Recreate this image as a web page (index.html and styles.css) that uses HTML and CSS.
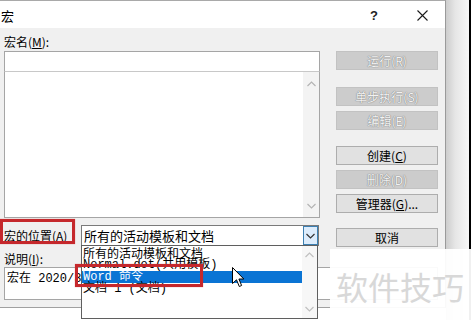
FILE: index.html
```html
<!DOCTYPE html>
<html lang="zh-CN">
<head>
<meta charset="utf-8">
<title>宏</title>
<link rel="stylesheet" href="styles.css">
</head>
<body>
<div class="screen">
  <div class="dialog">
    <div class="titlebar">
      <span class="title">宏</span>
      <span class="help">?</span>
      <span class="close"><svg width="11" height="11" viewBox="0 0 11 11"><path d="M0.5 0.5 L10.5 10.5 M10.5 0.5 L0.5 10.5" stroke="#1a1a1a" stroke-width="1.1" fill="none"/></svg></span>
    </div>
    <div class="content">
      <div class="main">
        <div class="left">
          <div class="label name-label">宏名(<u>M</u>):</div>
          <div class="input"></div>
          <div class="listbox">
            <div class="vscroll">
              <svg class="arrow" width="9" height="6" viewBox="0 0 9 6"><path d="M0.5 5 L4.5 1 L8.5 5" stroke="#b4b4b4" stroke-width="1.2" fill="none"/></svg>
              <svg class="arrow" width="9" height="6" viewBox="0 0 9 6"><path d="M0.5 1 L4.5 5 L8.5 1" stroke="#b4b4b4" stroke-width="1.2" fill="none"/></svg>
            </div>
          </div>
        </div>
        <div class="buttons">
          <div class="btn disabled">运行(R)</div>
          <div class="btn disabled gap-s">单步执行(S)</div>
          <div class="btn disabled gap-xs">编辑(E)</div>
          <div class="btn gap-m">创建(<u>C</u>)</div>
          <div class="btn disabled gap-xs">删除(D)</div>
          <div class="btn gap-xs">管理器(<u>G</u>)...</div>
        </div>
      </div>
      <div class="location-row">
        <div class="label loc-label">宏的位置(<u>A</u>)</div>
        <div class="combo">
          <span class="combo-text">所有的活动模板和文档</span>
          <span class="combo-btn"><svg width="9" height="6" viewBox="0 0 9 6"><path d="M0.5 1 L4.5 5 L8.5 1" stroke="#333" stroke-width="1.2" fill="none"/></svg></span>
        </div>
        <div class="btn cancel">取消</div>
      </div>
      <div class="label desc-label">说明(<u>I</u>):</div>
      <div class="desc">宏在 2020/3/25 由 user 创建</div>
    </div>
  </div>
  <div class="shadow"></div>
  <div class="edge"></div>

  <div class="dropdown">
    <div class="items">
      <div class="item cjk">所有的活动模板和文档</div>
      <div class="item">Normal.dot(共用模板)</div>
      <div class="item selected">Word 命令</div>
      <div class="item">文档 1 (文档)</div>
    </div>
    <div class="dd-scroll">
      <svg width="9" height="6" viewBox="0 0 9 6"><path d="M0.5 5 L4.5 1 L8.5 5" stroke="#c0c0c0" stroke-width="1.2" fill="none"/></svg>
      <svg width="9" height="6" viewBox="0 0 9 6"><path d="M0.5 1 L4.5 5 L8.5 1" stroke="#c0c0c0" stroke-width="1.2" fill="none"/></svg>
    </div>
  </div>

  <div class="redbox redbox-loc"></div>
  <div class="redbox redbox-word"></div>

  <svg class="cursor" width="13" height="21" viewBox="0 0 13 21"><path d="M0.5 0.5 L0.5 16.5 L4.5 12.8 L7.3 19.5 L9.6 18.5 L6.9 12 L11.8 12 Z" fill="#fff" stroke="#000" stroke-width="1" stroke-linejoin="miter"/></svg>

  <div class="watermark">软件技巧</div>
</div>
</body>
</html>
```
FILE: styles.css
```css
* { box-sizing: border-box; }

html, body {
  margin: 0;
  padding: 0;
  background: #ffffff;
}

body {
  font-family: "Noto Sans CJK SC", "Liberation Sans", sans-serif;
  font-size: 12px;
  color: #000;
}

u { text-decoration: underline; text-underline-offset: 1px; }

.screen {
  position: relative;
  width: 471px;
  height: 320px;
  overflow: hidden;
  display: flex;
  align-items: stretch;
}

.dialog {
  width: 446px;
  height: 308px;
  flex: none;
  background: #f0f0f0;
  border-top: 1px solid #a9a9a9;
  border-right: 1px solid #9a9a9a;
  border-bottom: 1px solid #a0a0a0;
  display: flex;
  flex-direction: column;
}

.titlebar {
  height: 27px;
  background: #ffffff;
  display: flex;
  align-items: center;
  position: relative;
  flex: none;
}

.title {
  font-size: 13px;
  line-height: 14px;
  margin-left: 1px;
  margin-top: 2px;
}

.help {
  margin-left: auto;
  font-family: "Liberation Sans", sans-serif;
  font-size: 13px;
  font-weight: bold;
  color: #222;
  margin-top: 1px;
  margin-right: 39px;
}

.close {
  display: flex;
  margin-right: 17px;
  margin-top: 1px;
}

.content {
  padding-left: 4px;
  display: flex;
  flex-direction: column;
}

.main {
  display: flex;
  align-items: flex-start;
}

.left {
  width: 316px;
  display: flex;
  flex-direction: column;
}

.label {
  font-size: 12px;
  line-height: 16px;
  white-space: nowrap;
}

.name-label {
  height: 23px;
  padding-top: 6px;
}

.input {
  height: 20px;
  background: #fff;
  border: 1px solid #a5a5a5;
  border-bottom: none;
}

.listbox {
  height: 147px;
  background: #fff;
  border: 1px solid #a5a5a5;
  border-top: 1px solid #c8c8c8;
  display: flex;
  justify-content: flex-end;
}

.vscroll {
  width: 16px;
  background: #f3f3f3;
  display: flex;
  flex-direction: column;
  justify-content: space-between;
  align-items: center;
  padding: 9px 0 8px;
}

.buttons {
  margin-left: 16px;
  margin-top: 23px;
  width: 102px;
  display: flex;
  flex-direction: column;
}

.btn {
  height: 19px;
  width: 102px;
  background: #e1e1e1;
  border: 1px solid #adadad;
  text-align: center;
  font-size: 12px;
  line-height: 17px;
  white-space: nowrap;
}

.btn.disabled {
  background: #cccccc;
  border-color: #c2c2c2;
  color: #f2f2f2;
  text-shadow: 0 0 1px #7d7d7d, 0 0 1px #7d7d7d;
}

.gap-s { margin-top: 17px; }
.gap-xs { margin-top: 5px; }
.gap-m { margin-top: 16px; }

.location-row {
  display: flex;
  align-items: flex-start;
  margin-top: 7px;
}

.loc-label {
  width: 77px;
  padding-top: 3px;
}

.combo {
  width: 238px;
  height: 21px;
  background: #fff;
  border: 1px solid #7a7a7a;
  display: flex;
  align-items: stretch;
}

.combo-text {
  flex: 1;
  font-size: 13px;
  line-height: 19px;
  padding-left: 2px;
  white-space: nowrap;
  overflow: hidden;
}

.combo-btn {
  width: 15px;
  background: #dcecfc;
  border: 1px solid #3c7fb1;
  display: flex;
  align-items: center;
  justify-content: center;
}

.cancel {
  margin-left: 17px;
  margin-top: 3px;
}

.desc-label {
  height: 20px;
  padding-top: 4px;
}

.desc {
  width: 434px;
  height: 33px;
  background: #fff;
  border: 1px solid #a5a5a5;
  font-family: "Liberation Mono", "Noto Sans CJK SC", monospace;
  font-size: 12px;
  line-height: 14px;
  padding: 4px 0 0 2px;
  white-space: nowrap;
}

.shadow {
  width: 23px;
  flex: none;
  background: linear-gradient(to right, #cdcdcd, #e6e6e6 40%, #f7f7f7);
}

.edge {
  width: 2px;
  flex: none;
  background: #000;
}

/* popup list */
.dropdown {
  position: absolute;
  left: 81px;
  top: 245px;
  width: 237px;
  height: 74px;
  background: #fff;
  border: 1px solid #5f5f5f;
  display: flex;
}

.items {
  flex: 1;
  padding-top: 1px;
}

.item {
  height: 12px;
  line-height: 12px;
  font-family: "Liberation Mono", "Noto Sans CJK SC", monospace;
  font-size: 12px;
  padding-left: 1px;
  white-space: nowrap;
  position: relative;
}

.item.cjk {
  font-family: "Noto Sans CJK SC", sans-serif;
}

.item.selected {
  background: #0a74d4;
  color: #fff;
}

.dd-scroll {
  width: 15px;
  background: #f7f7f7;
  display: flex;
  flex-direction: column;
  justify-content: space-between;
  align-items: center;
  padding: 6px 0 6px;
}

.redbox {
  position: absolute;
  border: 3px solid #c5282c;
  box-shadow: 0 0 1px rgba(197, 40, 44, 0.5);
}

.redbox-loc {
  left: 0;
  top: 219px;
  width: 75px;
  height: 25px;
}

.redbox-word {
  left: 75px;
  top: 264px;
  width: 128px;
  height: 23px;
}

.cursor {
  position: absolute;
  left: 232px;
  top: 267px;
}

.watermark {
  position: absolute;
  left: 330px;
  top: 249px;
  width: 141px;
  height: 71px;
  background: rgba(255, 255, 255, 0.94);
  color: #d8d8d8;
  font-family: "Noto Sans CJK SC", sans-serif;
  font-size: 32px;
  line-height: 32px;
  padding: 21px 0 0 6px;
  letter-spacing: 0;
  white-space: nowrap;
}
```
